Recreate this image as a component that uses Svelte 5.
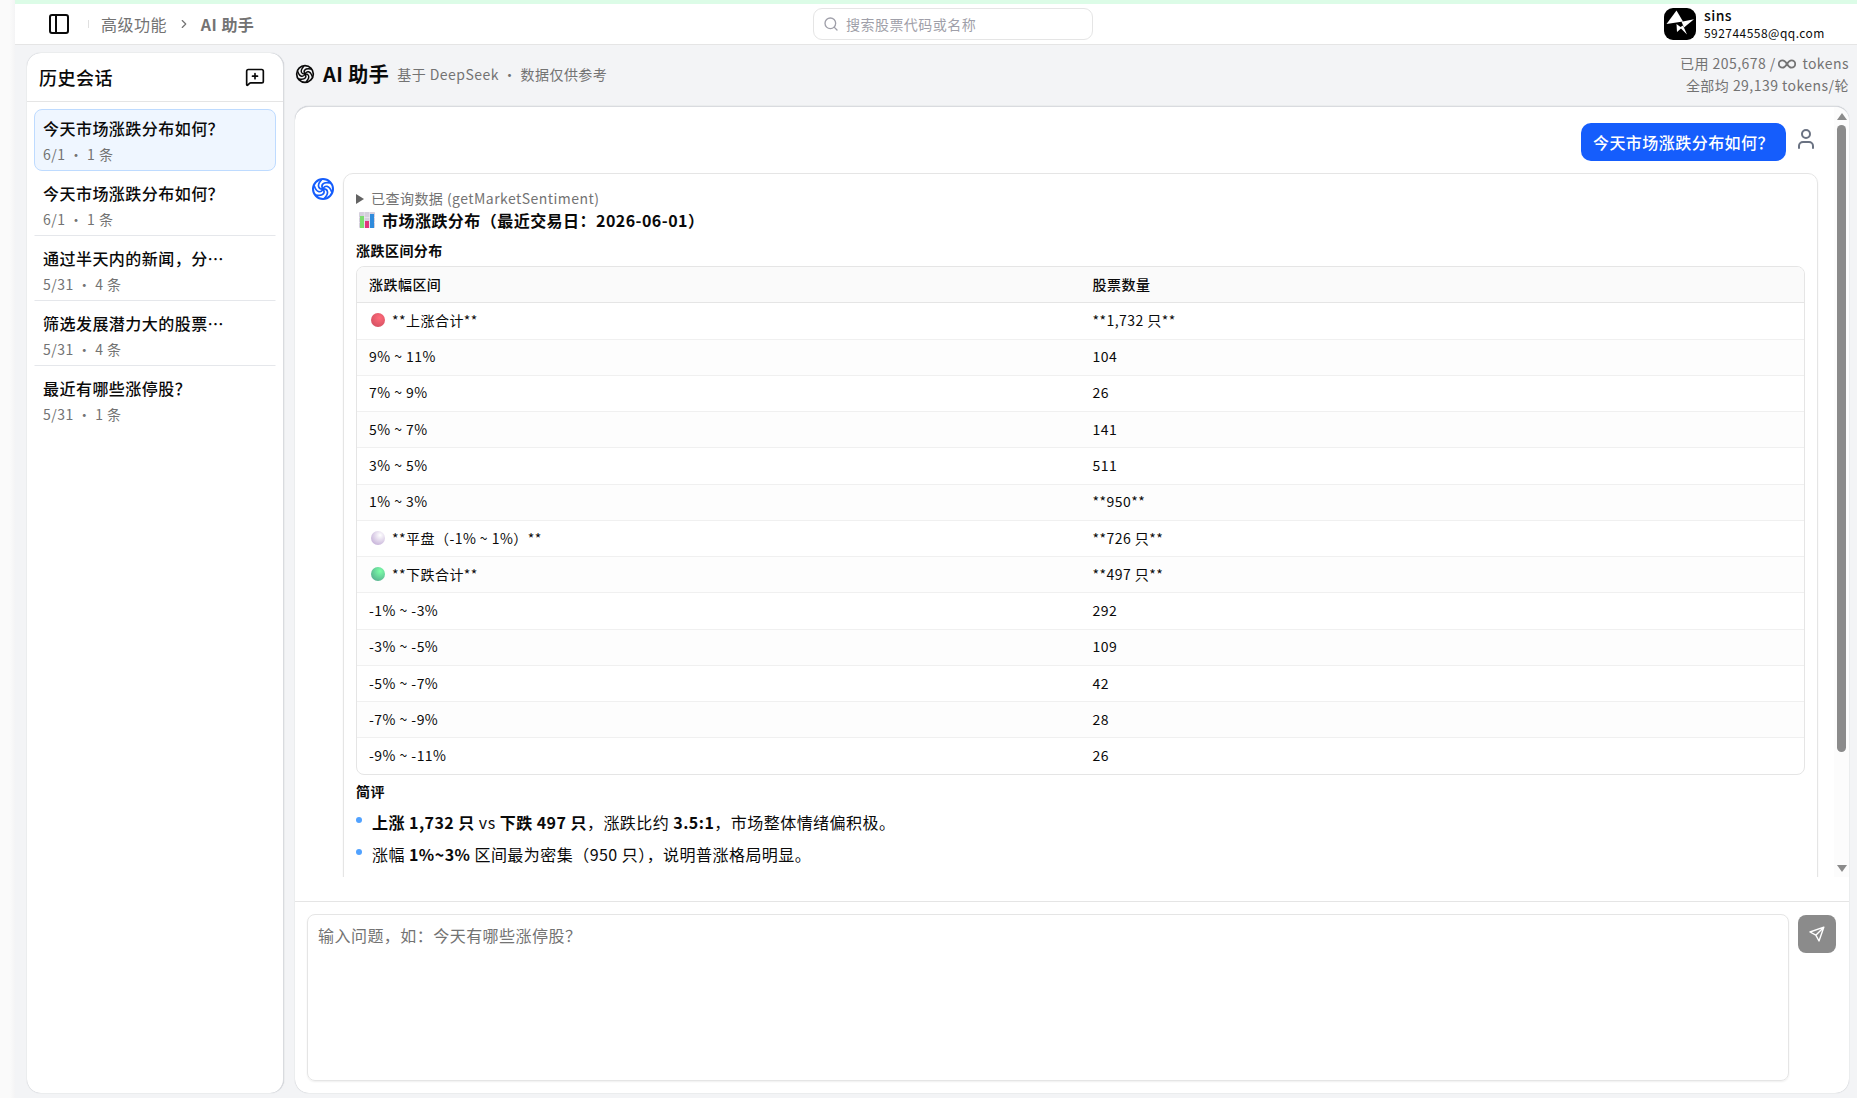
<script>
  const sessions = [
    { title: '今天市场涨跌分布如何？', meta: '6/1 ・ 1 条', active: true },
    { title: '今天市场涨跌分布如何？', meta: '6/1 ・ 1 条' },
    { title: '通过半天内的新闻，分⋯', meta: '5/31 ・ 4 条' },
    { title: '筛选发展潜力大的股票⋯', meta: '5/31 ・ 4 条' },
    { title: '最近有哪些涨停股？', meta: '5/31 ・ 1 条' },
  ];
  const rows = [
    { range: '**上涨合计**', count: '**1,732 只**', dot: 'red' },
    { range: '9% ~ 11%', count: '104' },
    { range: '7% ~ 9%', count: '26' },
    { range: '5% ~ 7%', count: '141' },
    { range: '3% ~ 5%', count: '511' },
    { range: '1% ~ 3%', count: '**950**' },
    { range: '**平盘（-1% ~ 1%）**', count: '**726 只**', dot: 'white' },
    { range: '**下跌合计**', count: '**497 只**', dot: 'green' },
    { range: '-1% ~ -3%', count: '292' },
    { range: '-3% ~ -5%', count: '109' },
    { range: '-5% ~ -7%', count: '42' },
    { range: '-7% ~ -9%', count: '28' },
    { range: '-9% ~ -11%', count: '26' },
  ];
  const blades = [0, 60, 120, 180, 240, 300];
</script>

{#snippet swirl(size)}
  <svg width={size} height={size} viewBox="0 0 24 24" fill="none" stroke="currentColor" stroke-width="2" stroke-linecap="round">
    <circle cx="12" cy="12" r="10" />
    {#each blades as a}
      <path d="M12 12C9.500 8.500 11.500 4.500 19 6" transform="rotate({a} 12 12)" stroke-width="1.700" />
    {/each}
  </svg>
{/snippet}

<div class="app">
  <div class="rail"></div>
  <div class="page">
    <div class="progress"></div>
    <header>
      <div class="crumbs">
        <svg class="panel-icon" width="24" height="24" viewBox="0 0 24 24" fill="none" stroke="currentColor" stroke-width="2"><rect x="3" y="3" width="18" height="18" rx="2" /><path d="M9 3v18" /></svg>
        <i class="sep"></i>
        <span>高级功能</span>
        <svg class="chev" width="14" height="14" viewBox="0 0 24 24" fill="none" stroke="currentColor" stroke-width="2" stroke-linecap="round" stroke-linejoin="round"><path d="m9 18 6-6-6-6" /></svg>
        <b>AI 助手</b>
      </div>
      <div class="search">
        <svg width="16" height="16" viewBox="0 0 24 24" fill="none" stroke="currentColor" stroke-width="2" stroke-linecap="round"><circle cx="11" cy="11" r="8" /><path d="m21 21-4.300-4.300" /></svg>
        <span>搜索股票代码或名称</span>
      </div>
      <div class="user">
        <svg width="32" height="32" viewBox="0 0 32 32"><rect width="32" height="32" rx="9" /><path fill="#fff" d="M12.500 2.500 2.500 16 19 13.500Z" /><path fill="#fff" d="M17.500 13.800 30 11.300 20 19.500Z" /><path fill="#fff" d="M12.500 16 13 24 17 20.500 23 26.500 19 17.500 16.500 19Z" /></svg>
        <div class="who"><div class="name">sins</div><div class="mail">592744558@qq.com</div></div>
      </div>
    </header>

    <div class="body">
      <aside class="card">
        <div class="side-head">
          <h2>历史会话</h2>
          <svg width="20" height="20" viewBox="0 0 24 24" fill="none" stroke="currentColor" stroke-width="2" stroke-linecap="round" stroke-linejoin="round"><path d="M22 17a2 2 0 0 1-2 2H6.828a2 2 0 0 0-1.414.586l-2.202 2.202A.710.710 0 0 1 2 21.286V5a2 2 0 0 1 2-2h16a2 2 0 0 1 2 2z" /><path d="M12 8v6" /><path d="M9 11h6" /></svg>
        </div>
        <div class="sessions">
          {#each sessions as s}
            <div class="session" class:active={s.active}>
              <div class="title">{s.title}</div>
              <div class="meta">{s.meta}</div>
            </div>
          {/each}
        </div>
      </aside>

      <main>
        <div class="main-head">
          <div class="heading">
            {@render swirl(20)}
            <h1>AI 助手</h1>
            <span>基于 DeepSeek ・ 数据仅供参考</span>
          </div>
          <div class="usage">
            <div>已用 205,678 /<svg class="inf" width="18" height="12" viewBox="0 0 18 12" fill="none" stroke="currentColor" stroke-width="1.800"><path d="M9 6C7.400 3.300 6 2.300 4.500 2.300a3.700 3.700 0 0 0 0 7.400C6 9.700 7.400 8.700 9 6s3-3.700 4.500-3.700a3.700 3.700 0 0 1 0 7.400C12 9.700 10.600 8.700 9 6Z" /></svg> tokens</div>
            <div>全部均 29,139 tokens/轮</div>
          </div>
        </div>

        <section class="card chat">
          <div class="scroll">
            <div class="messages">
              <div class="row-user">
                <div class="bubble">今天市场涨跌分布如何？</div>
                <svg width="24" height="24" viewBox="0 0 24 24" fill="none" stroke="currentColor" stroke-width="2" stroke-linecap="round"><path d="M19 21v-2a4 4 0 0 0-4-4H9a4 4 0 0 0-4 4v2" /><circle cx="12" cy="7" r="4" /></svg>
              </div>
              <div class="row-bot">
                <div class="bot-icon">{@render swirl(24)}</div>
                <div class="answer">
                  <div class="query"><i></i>已查询数据 (getMarketSentiment)</div>
                  <h3>
                    <svg width="16" height="16" viewBox="0 0 16 16"><rect width="16" height="16" rx="1" fill="#d5cfdd" /><path d="M0 5.500h16M0 10.500h16M5.300 0v16M10.600 0v16" stroke="#eeeaf2" stroke-width=".7" /><rect x="1" y="4" width="4" height="12" fill="#7ddc70" /><rect x="6" y="9" width="4" height="7" fill="#e0347c" /><rect x="11" y="2" width="4" height="14" fill="#2f8bdc" /></svg>
                    市场涨跌分布（最近交易日：2026-06-01）
                  </h3>
                  <h4>涨跌区间分布</h4>
                  <div class="table">
                    <div class="tr th"><div>涨跌幅区间</div><div>股票数量</div></div>
                    {#each rows as r}
                      <div class="tr">
                        <div>{#if r.dot}<i class="dot {r.dot}"></i>{/if}{r.range}</div>
                        <div>{r.count}</div>
                      </div>
                    {/each}
                  </div>
                  <h4 class="brief">简评</h4>
                  <ul>
                    <li><b>上涨 1,732 只</b> vs <b>下跌 497 只</b>，涨跌比约 <b>3.5:1</b>，市场整体情绪偏积极。</li>
                    <li>涨幅 <b>1%~3%</b> 区间最为密集（950 只），说明普涨格局明显。</li>
                  </ul>
                </div>
              </div>
            </div>
            <div class="bar"><i class="up"></i><i class="thumb"></i><i class="down"></i></div>
          </div>
          <div class="composer">
            <div class="input">输入问题，如：今天有哪些涨停股？</div>
            <div class="send">
              <svg width="16" height="16" viewBox="0 0 16 16" fill="none" stroke="currentColor" stroke-width="1.400" stroke-linejoin="round" stroke-linecap="round"><path d="M14.800 1.200 1 6l5.800 3.200L10 15Z M14.800 1.200 6.800 9.200" /></svg>
            </div>
          </div>
        </section>
      </main>
    </div>
  </div>
</div>

<style>
  :global(body) { margin: 0; }
  * { box-sizing: border-box; }
  h1, h2, h3, h4, ul { margin: 0; padding: 0; }
  svg { flex: none; display: block; }
  .app {
    display: flex; width: 100%; height: 1098px; overflow: hidden; background: #f3f4f6;
    font-family: "Noto Sans CJK SC", sans-serif; font-size: 16px; letter-spacing: .46px; color: #0a0a0a; line-height: 24px;
    white-space: nowrap;
  }
  .rail { width: 15px; background: linear-gradient(90deg, #fafafa 10px, #f4f4f5); }
  .page { flex: 1; display: flex; flex-direction: column; min-width: 0; }
  .progress { height: 4px; background: #dcfce7; }
  header { height: 41px; background: #fff; border-bottom: 1px solid #e5e5e5; display: grid; grid-template-columns: 798px 280px 1fr; align-items: center; }
  .crumbs { display: flex; align-items: center; color: #737373; padding-left: 32px; }
  .panel-icon { color: #0a0a0a; }
  .sep { width: 1px; height: 8px; background: #e0e0e0; margin: 0 12px 0 17px; }
  .chev { margin: 0 10px; }
  .crumbs b { font-weight: 700; }
  .search { height: 32px; border: 1px solid #e5e5e5; border-radius: 9px; display: flex; align-items: center; gap: 7px; padding-left: 9px; font-size: 14px; color: #9f9fa9; }
  .search span { margin-top: -1px; }
  .user { display: flex; justify-self: end; width: 193px; gap: 8px; align-items: center; }
  .name { font-size: 14px; font-weight: 500; line-height: 18px; margin-top: -2px; }
  .mail { font-size: 12px; line-height: 16px; margin-top: 1px; }
  .body { flex: 1; display: flex; gap: 11px; padding: 8px 8px 5px 12px; min-height: 0; }
  .card { background: #fff; border-radius: 14px; box-shadow: 0 0 1px 0 #a4a8b0; }
  aside { width: 257px; border-right: 1px solid #d9dbdf; }
  .side-head { height: 49px; display: flex; align-items: center; justify-content: space-between; padding: 0 18px 0 12px; border-bottom: 1px solid #e5e5e5; }
  h2 { font-size: 18px; font-weight: 500; }
  .sessions { padding: 7px; display: flex; flex-direction: column; gap: 3px; }
  .session { height: 62px; border: 1px solid transparent; border-bottom-color: #e5e7eb; padding: 6px 8px; }
  .session:last-child { border-color: transparent; }
  .session.active { background: #eff6ff; border-color: #bedbff; border-radius: 8px; }
  .title { font-weight: 500; line-height: 24px; }
  .meta { font-size: 14px; color: #737373; line-height: 20px; margin-top: 4px; }
  main { flex: 1; display: flex; flex-direction: column; min-width: 0; }
  .main-head { height: 53px; display: flex; justify-content: space-between; }
  .heading { display: flex; align-items: center; height: 42px; gap: 8px; }
  h1 { font-size: 20px; font-weight: 700; line-height: 28px; }
  .heading span { font-size: 14px; color: #737373; }
  .usage { text-align: right; font-size: 14px; line-height: 22px; color: #737373; margin-top: -1px; }
  .inf { display: inline-block; vertical-align: -1px; margin: 0 3px 0 2px; }
  .chat { flex: 1; display: flex; flex-direction: column; min-height: 0; overflow: hidden; border-top: 1px solid #d9dbdf; }
  .scroll { height: 770px; display: flex; overflow: hidden; }
  .messages { flex: 1; padding: 16px 16px 0; }
  .row-user { display: flex; justify-content: flex-end; gap: 8px; color: #6a7282; margin-bottom: 12px; }
  .row-user svg { margin-top: 4px; }
  .bubble { background: #155dfc; color: #fff; border-radius: 10px; height: 38px; line-height: 38px; padding: 0 12px; font-weight: 500; }
  .row-bot { display: flex; gap: 8px; }
  .bot-icon { color: #155dfc; margin-top: 4px; }
  .answer { flex: 1; height: 900px; border: 1px solid #e5e5e5; border-radius: 10px; box-shadow: 0 1px 2px #0001; padding: 13px 12px; }
  .query { display: flex; align-items: center; gap: 7px; font-size: 14px; line-height: 22px; color: #737373; }
  .query i { border-left: 8px solid #636363; border-top: 5px solid transparent; border-bottom: 5px solid transparent; margin-top: 1px; }
  h3 { display: flex; align-items: center; gap: 7px; font-size: 16px; line-height: 22px; padding-left: 3px; }
  h4 { font-size: 14px; line-height: 20px; margin-top: 9px; }
  .table { margin-top: 6px; border: 1px solid #e5e5e5; border-radius: 8px; overflow: hidden; }
  .tr { display: grid; grid-template-columns: 1fr 1fr; height: 36.280px; align-items: center; font-size: 14px; border-top: 1px solid #f0f0f0; }
  .tr > div { padding: 0 0 2px 12px; display: flex; align-items: center; white-space: pre; }
  .tr:nth-child(odd) { background: #fdfdfd; }
  .tr.th { height: 35.300px; background: #fafafa; font-weight: 500; border-top: 0; }
  .th + .tr { border-top-color: #e5e5e5; }
  .dot { width: 14px; height: 14px; border-radius: 50%; margin: 1px 7px 0 2px; }
  .red { background: radial-gradient(circle at 60% 35%, #ff6b7a, #c94a5c); }
  .white { background: radial-gradient(circle at 65% 30%, #fff, #b9a0d0); }
  .green { background: radial-gradient(circle at 65% 30%, #7dffa8, #4f9f8a); }
  .brief { margin-top: 6.500px; }
  ul { list-style: none; margin-top: 5px; }
  li { line-height: 32px; padding-left: 16px; position: relative; }
  li::before { content: ''; position: absolute; left: 0; top: 11px; width: 6px; height: 6px; border-radius: 50%; background: #51a2ff; }
  .bar { width: 15px; background: #fcfcfc; display: flex; flex-direction: column; align-items: center; padding: 6px 0 5px; }
  .up, .down { border: 4.500px solid transparent; border-width: 0 5px; }
  .up { border-bottom: 7px solid #8b8b8b; }
  .down { border-top: 7px solid #8b8b8b; margin-top: auto; }
  .thumb { width: 9px; height: 627px; border-radius: 5px; background: #8b8b8b; margin-top: 5px; }
  .composer { margin-top: 24px; flex: 1; border-top: 1px solid #e5e5e5; padding: 12px 13px 12px 12px; display: flex; gap: 9px; }
  .input { flex: 1; border: 1px solid #e5e5e5; border-radius: 8px; padding: 8px 10px; color: #737373; box-shadow: 0 1px 2px #0001; }
  .send { width: 38px; height: 38px; margin-top: 1px; border-radius: 8px; background: #8b8b8b; color: #fff; display: grid; place-items: center; }
</style>
